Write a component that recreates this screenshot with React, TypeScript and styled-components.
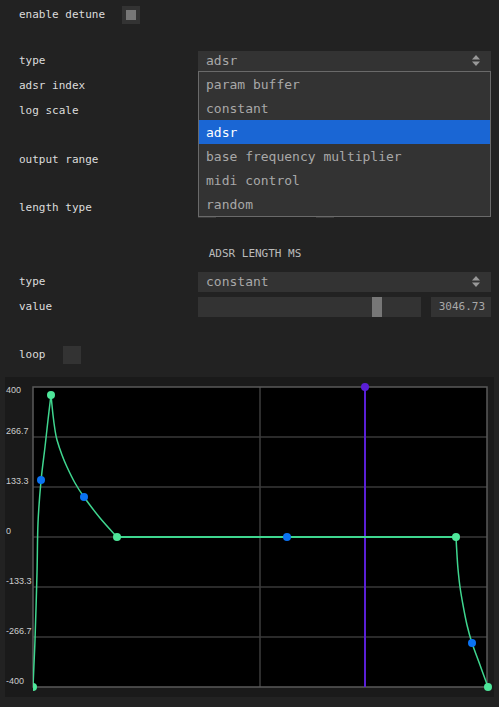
import { FC } from 'react';

import styled, { createGlobalStyle, css } from 'styled-components';

const GlobalStyle = createGlobalStyle`
    body {
        margin: 0;
        background: #222222;
        font-family: 'DejaVu Sans Mono', 'Liberation Mono', monospace;
    }
`;

const OPTIONS = ['param buffer', 'constant', 'adsr', 'base frequency multiplier', 'midi control', 'random'];

type Pt = [number, number];

const ATTACK: Pt[] = [
    [28, 310],
    [30, 263],
    [32, 196],
    [33, 146],
    [36, 104],
    [40, 70],
    [43, 43],
    [46, 18],
];
const DECAY: Pt[] = [
    [46, 18],
    [48, 38],
    [50, 53],
    [52, 63],
    [57, 78],
    [62, 90],
    [70, 106],
    [79, 120],
    [95, 141],
    [112, 160],
];
const RELEASE: Pt[] = [
    [451, 160],
    [452, 178],
    [453, 192],
    [455, 210],
    [458, 228],
    [462, 248],
    [467, 266],
    [475, 288],
    [483, 310],
];
const GREEN_DOTS: Pt[] = [
    [28, 310],
    [46, 18],
    [112, 160],
    [451, 160],
    [483, 310],
];
const BLUE_DOTS: Pt[] = [
    [36, 103],
    [79, 120],
    [282, 160],
    [467, 266],
];
const Y_LABELS = ['400', '266.7', '133.3', '0', '-133.3', '-266.7', '-400'];

// catmull-rom -> cubic bezier so the curve goes through every sample
const smoothPath = (pts: Pt[]) => {
    let d = `M${pts[0][0]},${pts[0][1]}`;
    for (let i = 0; i < pts.length - 1; i++) {
        const p0 = pts[i - 1] || pts[i];
        const p1 = pts[i];
        const p2 = pts[i + 1];
        const p3 = pts[i + 2] || p2;
        const c1x = p1[0] + (p2[0] - p0[0]) / 6;
        const c1y = p1[1] + (p2[1] - p0[1]) / 6;
        const c2x = p2[0] - (p3[0] - p1[0]) / 6;
        const c2y = p2[1] - (p3[1] - p1[1]) / 6;
        d += ` C${c1x},${c1y} ${c2x},${c2y} ${p2[0]},${p2[1]}`;
    }
    return d;
};

const SelectArrows: FC = () => (
    <ArrowIcon width="8" height="11" viewBox="0 0 8 11">
        <polygon points="4,0 8,4.5 0,4.5" fill="#999" />
        <polygon points="0,6.5 8,6.5 4,11" fill="#999" />
    </ArrowIcon>
);

const EnvelopeChart: FC = () => {
    const gridYs = [60, 110, 160, 210, 260];
    return (
        <ChartWrap>
            <svg width="489" height="320" viewBox="0 0 489 320">
                <defs>
                    <clipPath id="plotClip">
                        <rect x="28" y="0" width="461" height="320" />
                    </clipPath>
                </defs>
                <rect x="28" y="10" width="454" height="300" fill="#000" />
                {gridYs.map((y) => (
                    <line key={y} x1="28" x2="482" y1={y} y2={y} stroke="#2a2a2a" strokeWidth="2" />
                ))}
                <line x1="255" x2="255" y1="10" y2="310" stroke="#3c3c3c" strokeWidth="1.5" />
                <rect x="28" y="10" width="454" height="300" fill="none" stroke="#5a5a5a" strokeWidth="1.5" />
                {Y_LABELS.map((label, i) => (
                    <AxisLabel key={label} x="1" y={i === 0 ? 16 : 10 + i * 50 - 3}>
                        {label}
                    </AxisLabel>
                ))}
                <g clipPath="url(#plotClip)">
                    <line x1="360" x2="360" y1="10" y2="310" stroke="#5a1fd6" strokeWidth="2" />
                    <path d={smoothPath(ATTACK)} fill="none" stroke="#3fd68f" strokeWidth="1.5" />
                    <path d={smoothPath(DECAY)} fill="none" stroke="#3fd68f" strokeWidth="1.5" />
                    <line x1="112" x2="451" y1="160" y2="160" stroke="#3fd68f" strokeWidth="2" />
                    <path d={smoothPath(RELEASE)} fill="none" stroke="#3fd68f" strokeWidth="1.5" />
                    {GREEN_DOTS.map(([x, y]) => (
                        <circle key={`g${x}`} cx={x} cy={y} r="4" fill="#4ee69a" />
                    ))}
                    {BLUE_DOTS.map(([x, y]) => (
                        <circle key={`b${x}`} cx={x} cy={y} r="4" fill="#0a72f2" />
                    ))}
                    <circle cx="360" cy="10" r="4" fill="#5a1fd6" />
                </g>
            </svg>
        </ChartWrap>
    );
};

const App: FC = () => {
    const value = 3046.73;
    const thumbLeft = (value / 3750) * 214;

    return (
        <>
            <GlobalStyle />
            <Form>
                <Row height={25}>
                    <InlineLabel>enable detune</InlineLabel>
                    <Checkbox checked />
                </Row>
                <Spacer height={21} />
                <Row height={25}>
                    <Label>type</Label>
                    <Control>
                        <Select>
                            <SelectText>adsr</SelectText>
                            <SelectArrows />
                        </Select>
                        <Dropdown>
                            {OPTIONS.map((option) => (
                                <Option key={option} active={option === 'adsr'}>
                                    {option}
                                </Option>
                            ))}
                        </Dropdown>
                    </Control>
                </Row>
                <Row height={25}>
                    <Label>adsr index</Label>
                    <Control>
                        <SliderLine>
                            <SliderTrack>
                                <SliderThumb style={{ left: 0 }} />
                            </SliderTrack>
                            <NumberBox />
                        </SliderLine>
                    </Control>
                </Row>
                <Row height={25}>
                    <Label>log scale</Label>
                    <Control>
                        <Checkbox />
                    </Control>
                </Row>
                <Row height={72}>
                    <Label>output range</Label>
                    <Control>
                        <Stack>
                            <SliderLine>
                                <SliderTrack>
                                    <SliderThumb style={{ left: 0 }} />
                                </SliderTrack>
                                <NumberBox />
                            </SliderLine>
                            <SliderLine>
                                <SliderTrack>
                                    <SliderThumb style={{ left: 214 }} />
                                </SliderTrack>
                                <NumberBox />
                            </SliderLine>
                        </Stack>
                    </Control>
                </Row>
                <Row height={25}>
                    <Label>length type</Label>
                    <Control>
                        <RadioGroup>
                            <RadioOption>
                                <RadioBox />
                            </RadioOption>
                            <RadioOption>
                                <RadioBox />
                            </RadioOption>
                        </RadioGroup>
                    </Control>
                </Row>
                <SectionHeader>ADSR LENGTH MS</SectionHeader>
                <Row height={25}>
                    <Label>type</Label>
                    <Control>
                        <Select>
                            <SelectText>constant</SelectText>
                            <SelectArrows />
                        </Select>
                    </Control>
                </Row>
                <Row height={25}>
                    <Label>value</Label>
                    <Control>
                        <SliderLine>
                            <SliderTrack>
                                <SliderThumb style={{ left: thumbLeft }} />
                            </SliderTrack>
                            <NumberBox>{value.toFixed(2)}</NumberBox>
                        </SliderLine>
                    </Control>
                </Row>
                <Spacer height={23} />
                <Row height={25}>
                    <InlineLabel>loop</InlineLabel>
                    <Checkbox />
                </Row>
            </Form>
            <EnvelopeChart />
        </>
    );
};

const labelText = css`
    font-size: 11px;
    color: #dcdcdc;
    white-space: nowrap;
`;

const Form = styled.div`
    padding: 2px 8px 0 19px;
`;

const Row = styled.div<{ height: number }>`
    display: flex;
    align-items: center;
    height: ${({ height }) => height}px;
`;

const Spacer = styled.div<{ height: number }>`
    height: ${({ height }) => height}px;
`;

const Label = styled.div`
    ${labelText}
    width: 179px;
    flex-shrink: 0;
`;

const InlineLabel = styled.div`
    ${labelText}
    margin-right: 17px;
`;

const Control = styled.div`
    flex: 1;
    position: relative;
`;

const Checkbox = styled.div<{ checked?: boolean }>`
    width: 18px;
    height: 18px;
    background: #333333;
    position: relative;

    &::after {
        content: '';
        display: ${({ checked }) => (checked ? 'block' : 'none')};
        position: absolute;
        left: 4px;
        top: 4px;
        width: 10px;
        height: 10px;
        background: #777777;
    }
`;

const Select = styled.div`
    height: 20px;
    background: #333333;
    display: flex;
    align-items: center;
    justify-content: space-between;
    padding: 0 11px 0 8px;
`;

const SelectText = styled.span`
    font-size: 13px;
    color: #a8a8a8;
`;

const ArrowIcon = styled.svg`
    display: block;
`;

const Dropdown = styled.div`
    position: absolute;
    top: 20px;
    left: 0;
    right: 0;
    z-index: 2;
    background: #333333;
    border: 1px solid #6a6a6a;
`;

const Option = styled.div<{ active?: boolean }>`
    height: 24px;
    line-height: 25px;
    padding-left: 7px;
    font-size: 13px;
    color: ${({ active }) => (active ? '#ffffff' : '#a8a8a8')};
    background: ${({ active }) => (active ? '#1a66d4' : 'transparent')};
`;

const Stack = styled.div`
    display: flex;
    flex-direction: column;
    gap: 6px;
`;

const SliderLine = styled.div`
    display: flex;
    gap: 10px;
    height: 20px;
`;

const SliderTrack = styled.div`
    flex: 1;
    background: #333333;
    position: relative;
`;

const SliderThumb = styled.div`
    position: absolute;
    top: 0;
    bottom: 0;
    width: 10px;
    background: #777777;
`;

const NumberBox = styled.div`
    width: 60px;
    background: #333333;
    font-size: 11px;
    color: #a8a8a8;
    text-align: right;
    line-height: 20px;
    padding-right: 6px;
    box-sizing: border-box;
`;

const RadioGroup = styled.div`
    display: flex;
`;

const RadioOption = styled.div`
    width: 118px;
    display: flex;
    align-items: center;
`;

const RadioBox = styled.div`
    width: 18px;
    height: 20px;
    background: #3a3a3a;
`;

const SectionHeader = styled.div`
    height: 49px;
    box-sizing: border-box;
    padding-top: 27px;
    line-height: 14px;
    text-align: center;
    font-size: 11px;
    color: #bbbbbb;
`;

const ChartWrap = styled.div`
    margin: 10px 5px 0;
    width: 489px;
    height: 320px;
    background: #1a1a1a;

    svg {
        display: block;
    }
`;

const AxisLabel = styled.text`
    font-family: 'Liberation Sans', Arial, sans-serif;
    font-size: 9px;
    fill: #cccccc;
`;

export default App;
